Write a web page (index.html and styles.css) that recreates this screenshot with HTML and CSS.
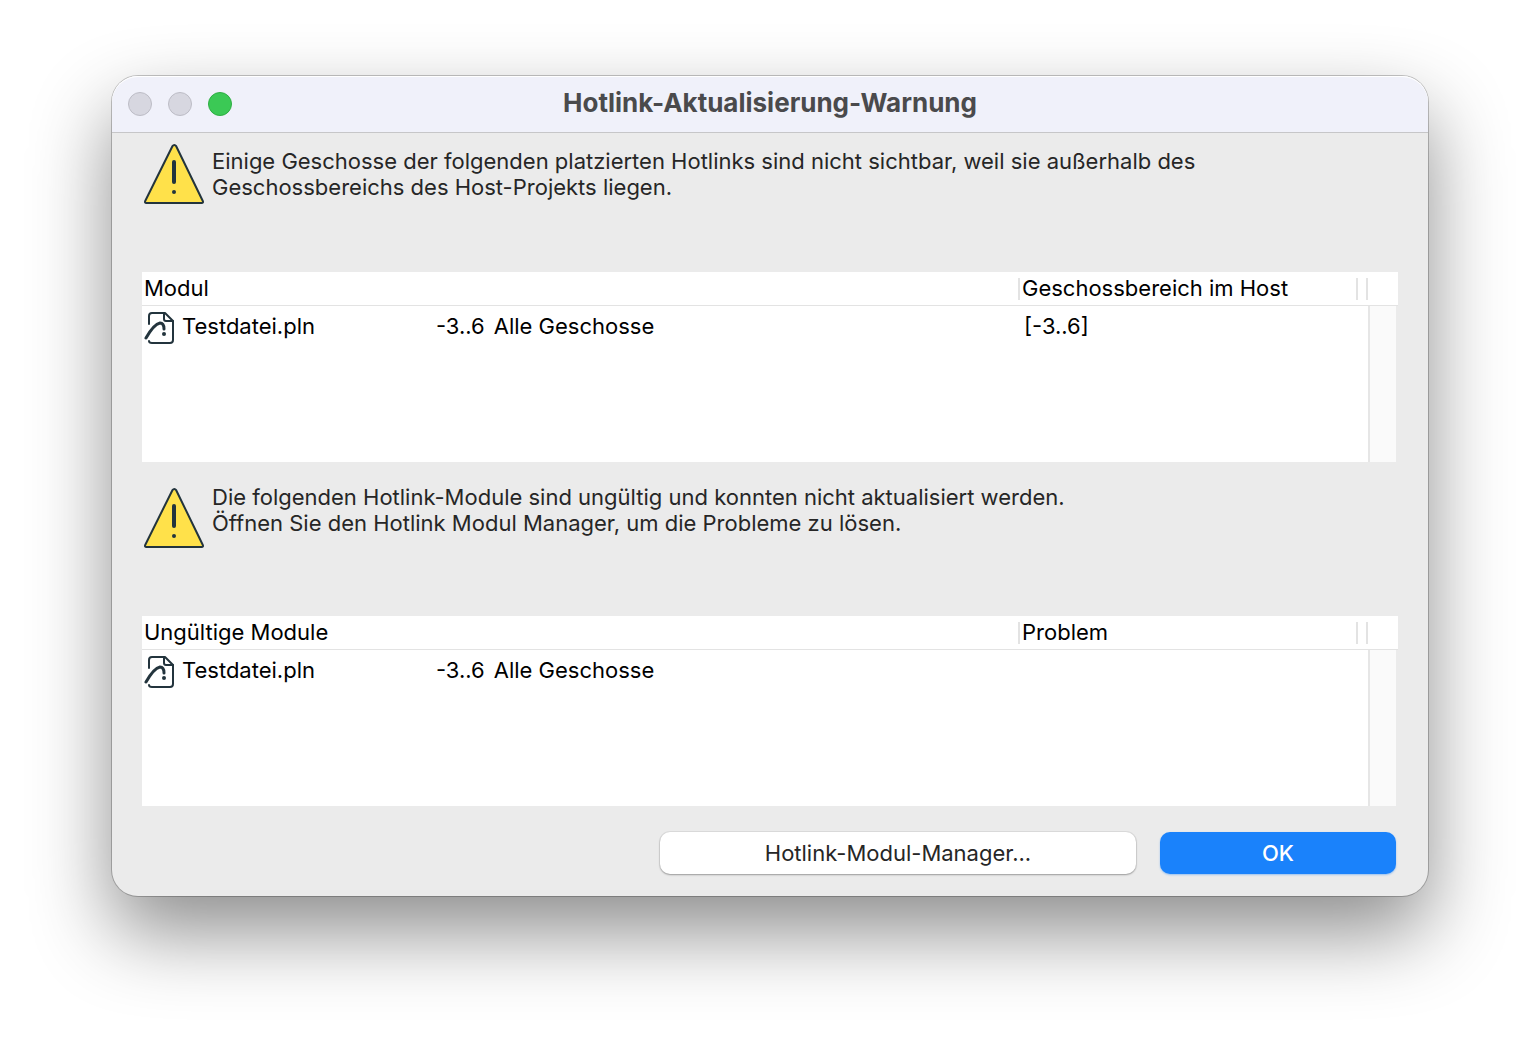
FILE: index.html
```html
<!DOCTYPE html>
<html lang="de">
<head>
<meta charset="UTF-8">
<title>Hotlink-Aktualisierung-Warnung</title>
<link rel="stylesheet" href="styles.css">
</head>
<body>
    <!-- shared icons -->
    <svg class="sprite" aria-hidden="true">
        <symbol id="icon-warning" viewBox="0 0 60 60">
            <path d="M28.400 2.200Q30.400 -.2 32.200 2.200L58.800 57Q59.600 59 57.600 59H2.400Q.4 59 1.200 57Z" fill="#ffe14a" stroke="#23343d" stroke-width="2" stroke-linejoin="round"/>
            <path d="M30 18V38" stroke="#23343d" stroke-width="4" stroke-linecap="round"/>
            <circle cx="30" cy="48" r="2" fill="#23343d"/>
        </symbol>
        <symbol id="icon-module" viewBox="0 0 32 34">
            <g fill="none" stroke="#23343d" stroke-width="2" stroke-linecap="round" stroke-linejoin="round">
                <path d="M5 13V5Q5 2 8 2H21L29 10V29Q29 32 26 32H8Q5 32 5 30"/>
                <path d="M20 2V8Q20 10 22 10H29"/>
                <path d="M2 27C6 20 11 13 16 12Q20 12 20 18" stroke-width="3"/>
            </g>
            <circle cx="20" cy="23" r="2" fill="#23343d"/>
        </symbol>
    </svg>

    <div class="dialog" role="dialog" aria-labelledby="dialogTitle">
        <header class="titlebar">
            <div class="lights">
                <button class="light" aria-label="Schließen" disabled></button>
                <button class="light" aria-label="Minimieren" disabled></button>
                <button class="light zoom" aria-label="Zoomen"></button>
            </div>
            <h1 id="dialogTitle">Hotlink-Aktualisierung-Warnung</h1>
        </header>

        <main class="content">
            <section class="hidden-stories">
                <div class="notice">
                    <svg class="warning"><use href="#icon-warning"/></svg>
                    <p>Einige Geschosse der folgenden platzierten Hotlinks sind nicht sichtbar, weil sie außerhalb des<br>Geschossbereichs des Host-Projekts liegen.</p>
                </div>
                <table class="list">
                    <colgroup>
                        <col class="col-name">
                        <col>
                        <col class="col-info">
                        <col class="col-end">
                        <col class="col-scroll">
                    </colgroup>
                    <thead>
                        <tr>
                            <th colspan="2">Modul</th>
                            <th class="split">Geschossbereich im Host</th>
                            <th class="split-both"></th>
                            <th></th>
                        </tr>
                    </thead>
                    <tbody>
                        <tr>
                            <td><span class="file"><svg class="module"><use href="#icon-module"/></svg>Testdatei.pln</span></td>
                            <td><span class="range"><span>-3..6</span><span>Alle Geschosse</span></span></td>
                            <td class="info">[-3..6]</td>
                            <td></td>
                            <td class="scroll" rowspan="2"></td>
                        </tr>
                        <tr class="empty">
                            <td colspan="4"></td>
                        </tr>
                    </tbody>
                </table>
            </section>

            <section class="invalid-modules">
                <div class="notice">
                    <svg class="warning"><use href="#icon-warning"/></svg>
                    <p>Die folgenden Hotlink-Module sind ungültig und konnten nicht aktualisiert werden.<br>Öffnen Sie den Hotlink Modul Manager, um die Probleme zu lösen.</p>
                </div>
                <table class="list">
                    <colgroup>
                        <col class="col-name">
                        <col>
                        <col class="col-info">
                        <col class="col-end">
                        <col class="col-scroll">
                    </colgroup>
                    <thead>
                        <tr>
                            <th colspan="2">Ungültige Module</th>
                            <th class="split">Problem</th>
                            <th class="split-both"></th>
                            <th></th>
                        </tr>
                    </thead>
                    <tbody>
                        <tr>
                            <td><span class="file"><svg class="module"><use href="#icon-module"/></svg>Testdatei.pln</span></td>
                            <td><span class="range"><span>-3..6</span><span>Alle Geschosse</span></span></td>
                            <td class="info"></td>
                            <td></td>
                            <td class="scroll" rowspan="2"></td>
                        </tr>
                        <tr class="empty">
                            <td colspan="4"></td>
                        </tr>
                    </tbody>
                </table>
            </section>

            <div class="buttons">
                <button class="btn manager">Hotlink-Modul-Manager...</button>
                <button class="btn ok">OK</button>
            </div>
        </main>
    </div>
</body>
</html>
```
FILE: styles.css
```css
* {
    margin: 0;
    padding: 0;
    box-sizing: border-box;
}

body {
    min-height: 100vh;
    font-family: Inter, "Liberation Sans", sans-serif;
    font-size: 22px;
    line-height: 26px;
    color: #262626;
    background: #fff;
    padding: 76px 112px;
}

.sprite {
    position: absolute;
    width: 0;
    height: 0;
}

.dialog {
    background: #ebebeb;
    border-radius: 26px;
    box-shadow: 0 0 0 1px rgba(0, 0, 0, 0.22), 0 36px 80px rgba(0, 0, 0, 0.45);
}

/* title bar */
.titlebar {
    display: grid;
    grid-template-columns: 1fr auto 1fr;
    align-items: center;
    height: 57px;
    padding: 0 16px;
    background: #f0f1fa;
    border-bottom: 1px solid #c6c6c8;
    border-radius: 26px 26px 0 0;
    box-shadow: inset 0 1px 0 #fff;
}

.titlebar h1 {
    padding-bottom: 2px;
    font-size: 26px;
    font-weight: 700;
    color: #4a4a4c;
}

.lights {
    display: flex;
    gap: 16px;
}

.light {
    width: 24px;
    height: 24px;
    border: 1px solid #bdbdc6;
    border-radius: 50%;
    background: #d7d7e0;
}

.light.zoom {
    background: #3bc955;
    border-color: #2eae42;
}

/* messages and lists */
.content {
    padding: 11px 30px 22px;
}

.hidden-stories {
    margin-bottom: 22px;
}

.invalid-modules {
    margin-bottom: 26px;
}

.notice {
    display: flex;
    gap: 8px;
    height: 128px;
    padding-left: 2px;
}

.notice p {
    padding-top: 4px;
}

.warning {
    flex: none;
    width: 60px;
    height: 60px;
}

.invalid-modules .notice {
    height: 132px;
}

.invalid-modules .notice p {
    padding-top: 0;
}

.invalid-modules .warning {
    margin-top: 4px;
}

.list {
    width: 100%;
    table-layout: fixed;
    border-collapse: separate;
    border-spacing: 0;
    background: #fff;
    color: #000;
}

.col-name {
    width: 294px;
}

.col-info {
    width: 338px;
}

.col-end {
    width: 12px;
}

.col-scroll {
    width: 30px;
}

.list th {
    height: 34px;
    padding: 0 0 2px 2px;
    font-weight: 400;
    text-align: left;
    border-bottom: 1px solid #e3e3e3;
}

.list .split {
    padding-left: 4px;
    background: linear-gradient(#e3e3e3, #e3e3e3) left center / 2px 22px no-repeat;
}

.list .split-both {
    background: linear-gradient(#e3e3e3, #e3e3e3) left center / 2px 22px no-repeat,
        linear-gradient(#e3e3e3, #e3e3e3) right center / 2px 22px no-repeat;
}

.list td {
    height: 44px;
    padding-top: 7px;
    vertical-align: top;
}

.list .empty td {
    height: 112px;
}

.list .info {
    padding-left: 6px;
}

.list .scroll {
    background: #fafafa;
    border-left: 2px solid #e6e6e6;
    border-right: 2px solid #ebebeb;
}

.file {
    display: flex;
    gap: 6px;
    padding-left: 2px;
}

.module {
    flex: none;
    width: 32px;
    height: 34px;
    margin-top: -2px;
}

.range {
    display: flex;
    gap: 9px;
}

/* buttons */
.buttons {
    display: flex;
    justify-content: flex-end;
    gap: 24px;
    padding-right: 2px;
}

.btn {
    height: 42px;
    font: inherit;
    color: #262626;
    background: #fff;
    border: none;
    border-radius: 10px;
    box-shadow: 0 0 0 1px rgba(0, 0, 0, 0.06), 0 1px 2px rgba(0, 0, 0, 0.3);
}

.manager {
    width: 476px;
}

.ok {
    width: 236px;
    color: #fff;
    font-weight: 500;
    background: #1a82fb;
    box-shadow: 0 1px 2px rgba(26, 130, 251, 0.4);
}
```
